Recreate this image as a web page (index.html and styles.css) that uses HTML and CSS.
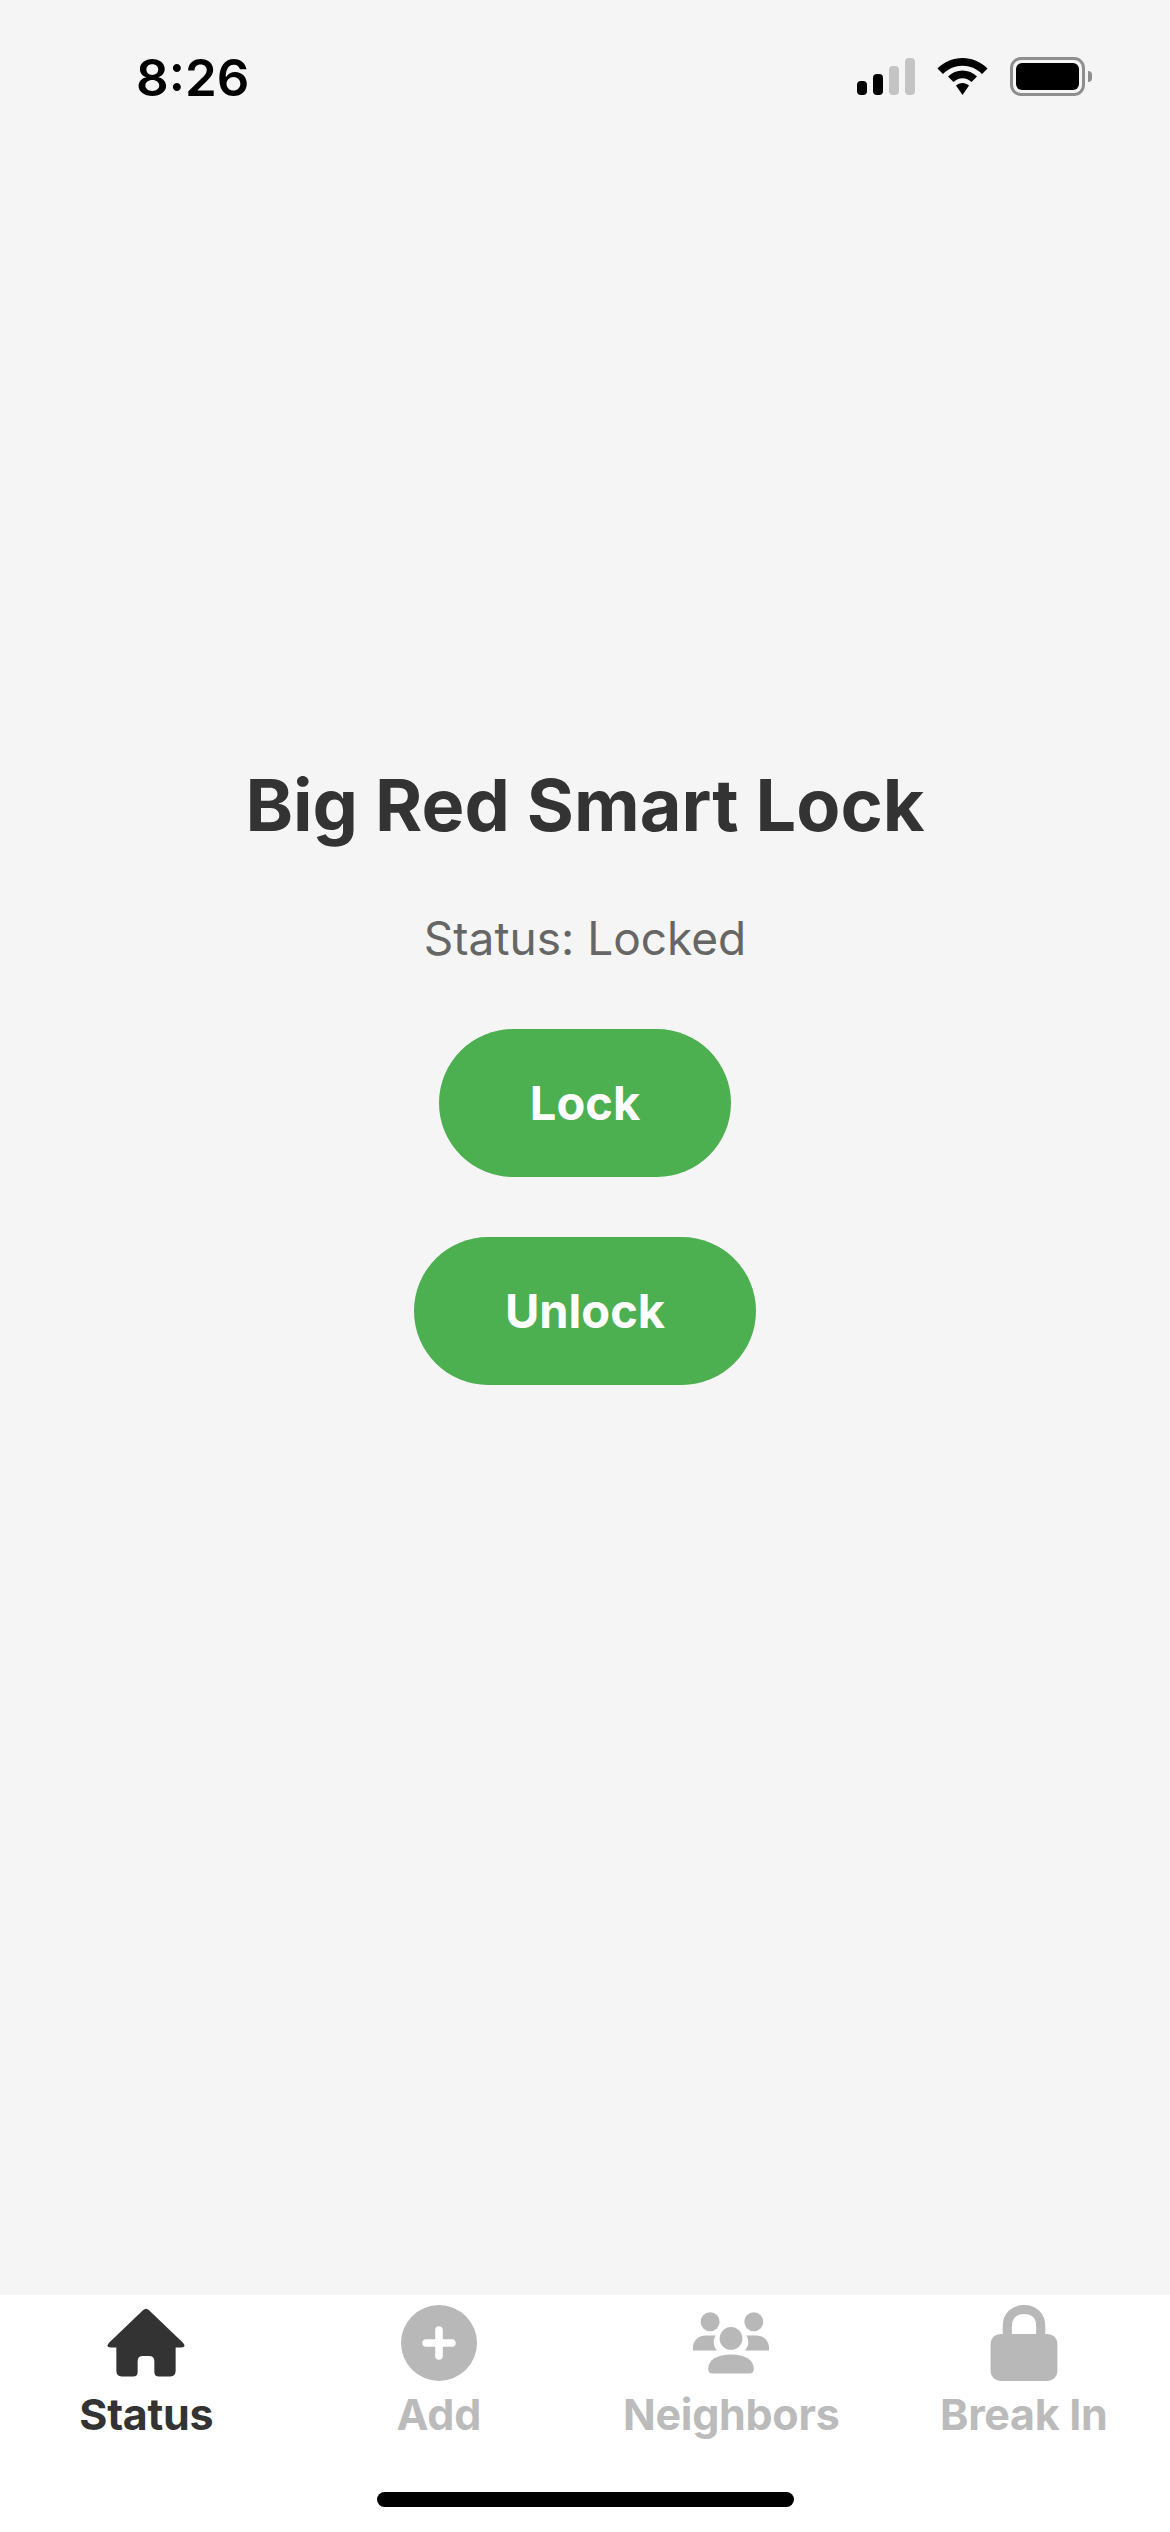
FILE: index.html
```html
<!DOCTYPE html>
<html lang="en">
<head>
<meta charset="utf-8">
<title>Big Red Smart Lock</title>
<link rel="stylesheet" href="styles.css">
</head>
<body>
<div class="screen">
  <header class="statusbar">
    <span class="time">8:26</span>
    <div class="indicators">
      <div class="signal">
        <span class="bar bar1"></span><span class="bar bar2"></span><span class="bar bar3 off"></span><span class="bar bar4 off"></span>
      </div>
      <svg class="wifi" viewBox="0 0 51 37"><path d="M25.500 0C16 0 7.400 3.700 0.500 10.500L6 16C11.500 10.700 18 7.800 25.500 7.800S39.500 10.700 45 16L50.500 10.500C43.600 3.700 35 0 25.500 0Z"/><path d="M25.500 12.500C20 12.500 15 14.600 11 18.500L16.500 24C19 21.600 22 20.200 25.500 20.200S32 21.600 34.500 24L40 18.500C36 14.600 31 12.500 25.500 12.500Z"/><path d="M25.500 25C23 25 20.800 25.900 19 27.500L25.500 37L32 27.500C30.200 25.900 28 25 25.500 25Z"/></svg>
      <div class="battery"><div class="battery-shell"><span class="battery-fill"></span></div><span class="battery-nub"></span></div>
    </div>
  </header>
  <main class="content">
    <h1 class="title">Big Red Smart Lock</h1>
    <p class="state">Status: Locked</p>
    <button class="action">Lock</button>
    <button class="action">Unlock</button>
  </main>
  <nav class="tabbar">
    <div class="tabs">
      <div class="tab active">
        <svg class="icon" viewBox="0 0 100 100"><path d="M46 7Q50 3 54 7L98 49Q102 53 100 55Q99 56 96 56H89V87Q89 94 82 94H67Q61 94 61 88V74Q61 67 54 67H46Q39 67 39 74V88Q39 94 33 94H18Q11 94 11 87V56H4Q1 56 0 55Q-2 53 2 49Z"/></svg>
        <span class="label">Status</span>
      </div>
      <div class="tab">
        <svg class="icon" viewBox="0 0 100 100"><circle cx="50" cy="50" r="50"/><path class="cut" d="M50 33V67M33 50H67"/></svg>
        <span class="label">Add</span>
      </div>
      <div class="tab">
        <svg class="icon" viewBox="0 0 100 100"><circle cx="22.500" cy="22" r="12.500"/><circle cx="80" cy="22" r="12.500"/><path d="M0 60V56C0 46 8 40 17 40H30C26 46 26 54 32 60Z"/><path d="M100 60V56C100 46 92 40 83 40H70C74 46 74 54 68 60Z"/><circle cx="50" cy="44" r="15"/><path d="M20 84C20 72 32 65 50 65S80 72 80 84Q80 90 75 90H25Q20 90 20 84Z"/></svg>
        <span class="label">Neighbors</span>
      </div>
      <div class="tab">
        <svg class="icon" viewBox="0 0 100 100"><path class="shackle" d="M28 42V28C28 14 37 6 50 6S72 14 72 28V42"/><rect x="6" y="38" width="88" height="62" rx="13"/></svg>
        <span class="label">Break In</span>
      </div>
    </div>
    <div class="homebar"></div>
  </nav>
</div>
</body>
</html>
```
FILE: styles.css
```css
* { box-sizing: border-box; }
html, body { margin: 0; padding: 0; }
body { font-family: Inter, "Liberation Sans", sans-serif; background: #f5f5f5; }
.screen { width: 1170px; height: 2532px; display: flex; flex-direction: column; overflow: hidden; }

.statusbar { height: 156px; flex: none; display: flex; justify-content: space-between; align-items: flex-start; padding: 47px 78px 0 136px; }
.time { font-size: 51px; line-height: 61px; font-weight: 600; color: #000; }
.indicators { display: flex; align-items: flex-start; padding-top: 11px; }
.signal { display: flex; align-items: flex-end; gap: 6px; height: 37px; }
.bar { width: 10px; background: #000; border-radius: 4px; }
.bar.off { background: #c4c4c4; }
.bar1 { height: 14px; }
.bar2 { height: 21px; }
.bar3 { height: 29px; }
.bar4 { height: 37px; }
.wifi { width: 51px; height: 37px; margin-left: 22px; fill: #000; }
.battery { display: flex; align-items: center; margin-left: 22px; margin-top: -1px; }
.battery-shell { width: 75px; height: 39px; border: 3px solid #8e8e8e; border-radius: 11px; padding: 3px; }
.battery-fill { display: block; height: 100%; width: 100%; background: #000; border-radius: 6px; }
.battery-nub { width: 4px; height: 11px; margin-left: 3px; background: #8e8e8e; border-radius: 0 4px 4px 0; }

.content { flex: 1; display: flex; flex-direction: column; align-items: center; justify-content: center; padding-bottom: 246px; }
.title { margin: 0 0 62px; font-size: 72px; line-height: 87px; font-weight: 700; color: #333; }
.state { margin: 0 0 63px; font-size: 46px; line-height: 56px; font-weight: 400; color: #666; }
.action { height: 148px; margin-bottom: 60px; padding: 0; border: 0; border-radius: 75px; background: #4caf50; color: #fff; font: 700 47px/58px Inter, "Liberation Sans", sans-serif; }
.action:first-of-type { width: 292px; }
.action:last-of-type { width: 342px; }

.tabbar { height: 237px; flex: none; background: #fff; display: flex; flex-direction: column; }
.tabs { display: flex; padding-top: 10px; }
.tab { flex: 1; display: flex; flex-direction: column; align-items: center; gap: 8px; }
.icon { width: 76px; height: 76px; fill: #b8b8b8; overflow: visible; }
.tab.active .icon { fill: #333; }
.cut { fill: none; stroke: #fff; stroke-width: 10; stroke-linecap: round; }
.shackle { fill: none; stroke: #b8b8b8; stroke-width: 12; }
.label { font-size: 43px; line-height: 51px; font-weight: 700; letter-spacing: -0.3px; color: #bbb; }
.tab.active .label { color: #333; }
.homebar { width: 417px; height: 15px; margin: 52px auto 0; background: #000; border-radius: 8px; }
```
